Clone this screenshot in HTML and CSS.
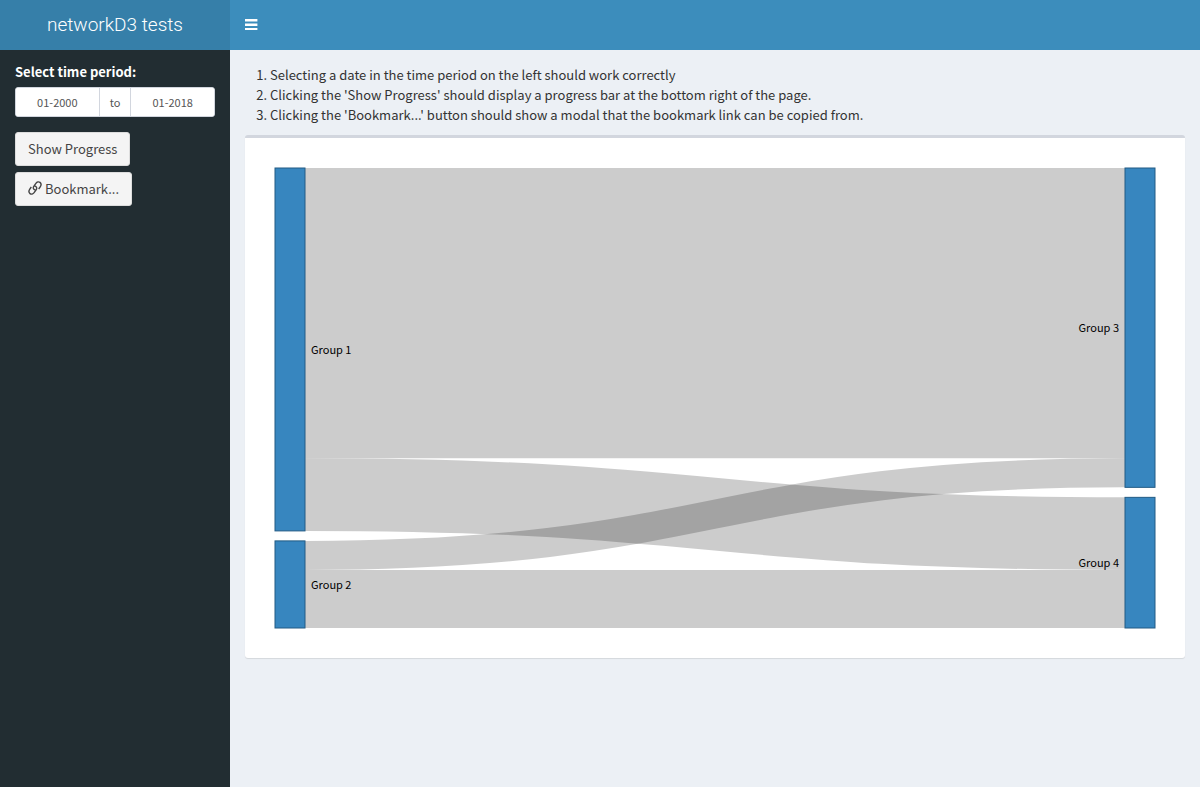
FILE: index.html
```html
<!DOCTYPE html>
<html lang="en">
<head>
<meta charset="utf-8">
<meta name="viewport" content="width=device-width, initial-scale=1">
<title>networkD3 tests</title>
<link rel="stylesheet" href="styles.css">
</head>
<body>
<div class="wrapper">
  <header class="main-header">
    <a class="logo" href="#">networkD3 tests</a>
    <nav class="navbar">
      <button class="sidebar-toggle" type="button" aria-label="Toggle navigation">
        <svg class="icon-bars" viewBox="0 0 13 12" aria-hidden="true"><path d="M0 0h12.400v2.400H0zM0 4.500h12.400v2.400H0zM0 9h12.400v2.100H0z"/></svg>
      </button>
    </nav>
  </header>
  <div class="page">
    <aside class="sidebar">
      <form class="sidebar-form">
        <div class="form-group">
          <label class="control-label" for="start">Select time period:</label>
          <div class="date-range">
            <input class="date-input" id="start" type="text" value="01-2000">
            <span class="date-addon">to</span>
            <input class="date-input" id="end" type="text" value="01-2018" aria-label="End of time period">
          </div>
        </div>
        <button class="btn" type="button">Show Progress</button>
        <button class="btn" type="button"><svg class="icon-link" viewBox="0 0 14 14" aria-hidden="true"><path d="M7.400 9.200C5.300 8.600 4.700 6.800 5.900 5.200L7.900 2.300C9 .8 10.700.4 12 1.400S13.200 4.300 12.200 5.800L10.700 8M6.600 4.800C8.700 5.400 9.300 7.200 8.100 8.800L6.100 11.700C5 13.200 3.300 13.600 2 12.600S.8 9.700 1.800 8.200L3.300 6"/></svg>Bookmark...</button>
      </form>
    </aside>
    <main class="content">
      <ol class="instructions">
        <li>Selecting a date in the time period on the left should work correctly</li>
        <li>Clicking the 'Show Progress' should display a progress bar at the bottom right of the page.</li>
        <li>Clicking the 'Bookmark...' button should show a modal that the bookmark link can be copied from.</li>
      </ol>
      <section class="box">
        <svg class="sankey" viewBox="0 0 880 460" role="img" aria-label="Flows between groups">
          <g class="links">
            <path d="M30 145.160H850" stroke-width="290.320"/>
            <path d="M30 326.610C440 326.610 440 365.640 850 365.640" stroke-width="72.580"/>
            <path d="M30 387.420C440 387.420 440 304.840 850 304.840" stroke-width="29.030"/>
            <path d="M30 430.970H850" stroke-width="58.060"/>
          </g>
          <g class="nodes">
            <rect x="0" y="0" width="30" height="362.900"/>
            <rect x="0" y="372.900" width="30" height="87.100"/>
            <rect x="850" y="0" width="30" height="319.350"/>
            <rect x="850" y="329.350" width="30" height="130.650"/>
          </g>
          <g class="labels">
            <text x="36" y="186">Group 1</text>
            <text x="36" y="421">Group 2</text>
            <text class="label-end" x="844" y="164">Group 3</text>
            <text class="label-end" x="844" y="399">Group 4</text>
          </g>
        </svg>
      </section>
    </main>
  </div>
</div>
</body>
</html>
```
FILE: styles.css
```css
* { box-sizing: border-box; }

body {
  margin: 0;
  background: #ecf0f5;
  color: #333;
  font-family: "Source Sans Pro", "Noto Sans CJK SC", "Noto Sans", sans-serif;
  font-size: 13px;
  line-height: 20px;
}

.wrapper {
  display: flex;
  flex-direction: column;
  min-height: 100vh;
}

.main-header {
  display: flex;
  height: 50px;
}

.logo {
  flex: 0 0 230px;
  background: #367fa9;
  color: #fff;
  font-family: "Helvetica Neue", Roboto, sans-serif;
  font-size: 19px;
  font-weight: 300;
  line-height: 50px;
  text-align: center;
  text-decoration: none;
}

.navbar {
  display: flex;
  flex: 1;
  background: #3c8dbc;
}

.sidebar-toggle {
  display: flex;
  align-items: center;
  padding: 0 15px;
  border: 0;
  background: transparent;
  color: #fff;
}

.icon-bars {
  width: 13px;
  height: 12px;
  fill: currentColor;
}

.page {
  display: flex;
  flex: 1;
}

.sidebar {
  flex: 0 0 230px;
  min-width: 0;
  padding: 12px 15px;
  background: #222d32;
}

.sidebar-form {
  display: flex;
  flex-direction: column;
  align-items: flex-start;
  gap: 6px;
}

.form-group {
  width: 100%;
  margin-bottom: 9px;
}

.control-label {
  display: block;
  margin-bottom: 5px;
  color: #fff;
  font-weight: 700;
}

.date-range {
  display: flex;
  height: 30px;
  border: 1px solid #d2d6de;
  border-radius: 3px;
  background: #fff;
  overflow: hidden;
}

.date-input {
  flex: 1;
  width: 0;
  min-width: 0;
  padding: 0;
  border: 0;
  color: #555;
  font: inherit;
  font-size: 11px;
  text-align: center;
}

.date-addon {
  padding: 0 10px;
  border: solid #d2d6de;
  border-width: 0 1px;
  color: #555;
  font-size: 11px;
  line-height: 28px;
}

.btn {
  display: flex;
  align-items: center;
  height: 34px;
  padding: 0 12px;
  border: 1px solid #ddd;
  border-radius: 3px;
  background: #f4f4f4;
  color: #444;
  font: inherit;
}

.icon-link {
  width: 14px;
  height: 14px;
  margin: 0 3px 2px 0;
  fill: none;
  stroke: currentColor;
  stroke-width: 1.400;
}

.content {
  flex: 1;
  min-width: 0;
  padding: 15px;
}

.instructions {
  margin: 0 0 10px;
  padding-left: 25px;
}

.box {
  padding: 30px;
  border-top: 3px solid #d2d6de;
  border-radius: 3px;
  background: #fff;
  box-shadow: 0 1px 1px rgba(0, 0, 0, .1);
}

.sankey {
  display: block;
  width: 100%;
  overflow: visible;
}

.links path {
  fill: none;
  stroke: #000;
  stroke-opacity: .2;
}

.nodes rect {
  fill: #3182bd;
  fill-opacity: .97;
  stroke: #225b84;
}

.labels text {
  fill: #000;
  font-size: 11px;
}

.labels .label-end {
  text-anchor: end;
}
```
